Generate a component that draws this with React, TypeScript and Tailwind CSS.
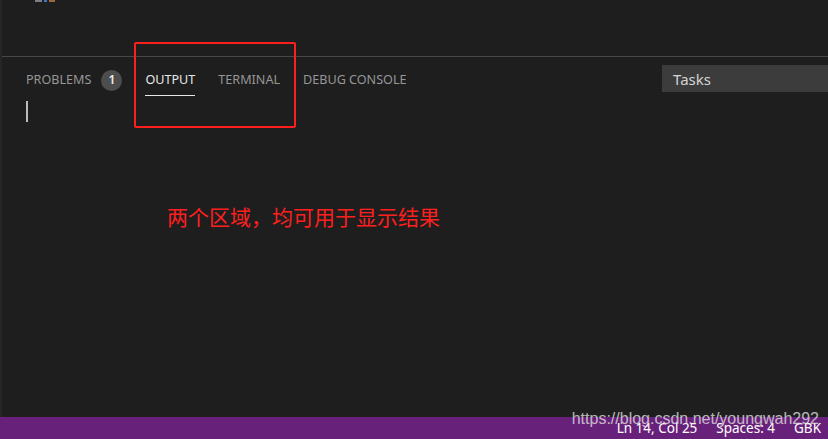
import React from 'react'

const tabs = [
    { label: 'PROBLEMS', active: false, badge: '1' },
    { label: 'OUTPUT', active: true },
    { label: 'TERMINAL', active: false },
    { label: 'DEBUG CONSOLE', active: false },
]

export default function App() {
    return (
        <div className='relative flex h-[439px] w-full flex-col overflow-hidden bg-[#1e1e1e] font-["Noto_Sans","Open_Sans",sans-serif]'>
            <div className='flex flex-1'>
                {/* left strip */}
                <div className='w-[2px] bg-[#252526]'></div>

                <div className='flex flex-1 flex-col'>
                    {/* editor area (mostly cut off) */}
                    <div className='h-[57px] border-b border-[#474747] pl-[33px]'>
                        <div className='flex gap-[2px]'>
                            <span className='h-[2px] w-[7px] bg-[#7a8088]'></span>
                            <span className='h-[2px] w-[3px] bg-[#3a78c0]'></span>
                            <span className='h-[2px] w-[6px] bg-[#9a6a3a]'></span>
                        </div>
                    </div>

                    {/* panel header */}
                    <div className='flex h-[44px] items-start justify-between'>
                        <div className='flex items-center gap-[23px] pl-[24px] pt-[12px]'>
                            {tabs.map((t) => (
                                <div key={t.label} className='relative flex h-[22px] items-center gap-[10px]'>
                                    <span className={'text-[12.6px] ' + (t.active ? 'text-[#e7e7e7]' : 'text-[#969696]')}>{t.label}</span>
                                    {t.badge && (
                                        <span className='flex h-[21px] w-[21px] items-center justify-center rounded-full bg-[#4d4d4d] text-[12px] font-semibold text-[#eeeeee]'>{t.badge}</span>
                                    )}
                                    {t.active && <span className='absolute -bottom-[5px] left-0 h-[1px] w-full bg-[#e7e7e7]'></span>}
                                </div>
                            ))}
                        </div>
                        <div className='mt-[8px] flex h-[27px] w-[166px] items-center bg-[#3c3c3c] pl-[11px] pt-[2px] text-[15px] text-[#d4d4d4]'>Tasks</div>
                    </div>

                    {/* output content */}
                    <div className='flex-1 pl-[24px]'>
                        <div className='h-[21px] w-[2px] bg-[#bcbcbc]'></div>
                        <p className='mt-[82px] pl-[141px] text-[21px] leading-[24px] text-[#ff1f1f] font-["Noto_Sans_CJK_SC",sans-serif]'>两个区域，均可用于显示结果</p>
                    </div>
                </div>
            </div>

            {/* status bar */}
            <div className='flex h-[22px] items-center justify-end gap-[19px] bg-[#68217a] pr-[7px] text-[13.5px] text-white font-["Liberation_Sans_Narrow","Noto_Sans",sans-serif]'>
                <span>Ln 14, Col 25</span>
                <span>Spaces: 4</span>
                <span>GBK</span>
            </div>

            {/* red annotation box */}
            <div className='absolute left-[134px] top-[42px] h-[86px] w-[162px] rounded-[2px] border-[2px] border-[#ff1e1e]'></div>

            {/* watermark */}
            <div className='absolute right-[9px] top-[409px] text-[16px] leading-[20px] text-[#e0e0e0]/80 font-["Liberation_Sans_Narrow","Liberation_Sans",sans-serif]'>https://blog.csdn.net/youngwah292</div>
        </div>
    )
}
